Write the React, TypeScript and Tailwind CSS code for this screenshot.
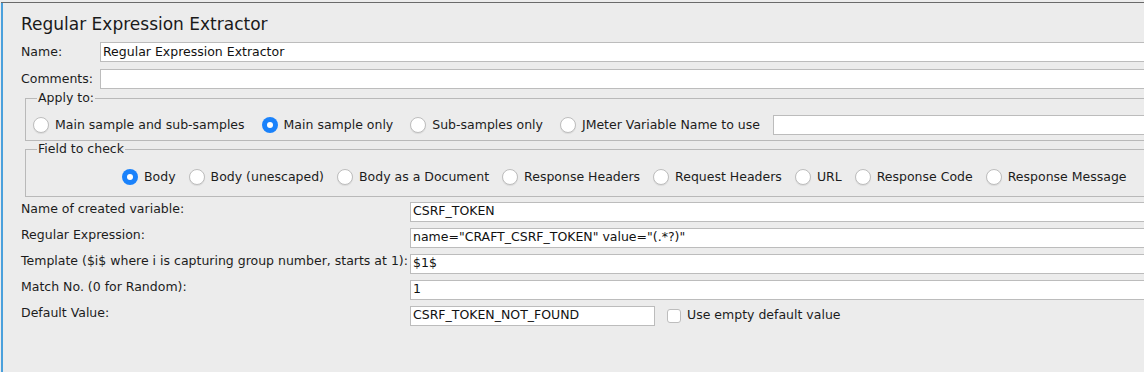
import React from 'react'

const font = { fontFamily: '"DejaVu Sans", "Liberation Sans", sans-serif' }

interface RadioProps {
  label: string
  checked?: boolean
}

const Radio: React.FC<RadioProps> = ({ label, checked }) => (
  <label className="flex items-center gap-[6px] whitespace-nowrap">
    {checked ? (
      <span className="flex h-[16px] w-[16px] items-center justify-center rounded-full bg-[#1a82fb]">
        <span className="h-[6px] w-[6px] rounded-full bg-white" />
      </span>
    ) : (
      <span className="h-[16px] w-[16px] rounded-full border border-[#bdbdbd] bg-white shadow-[0_1px_1px_rgba(0,0,0,0.08)]" />
    )}
    <span>{label}</span>
  </label>
)

const TextBox: React.FC<{ value?: string; className?: string }> = ({ value = '', className = '' }) => (
  <div
    className={`flex h-[20px] items-center border border-[#bcbcbc] bg-white px-[2px] text-[#111] ${className}`}
  >
    {value}
  </div>
)

const rows = [
  { label: 'Name of created variable:', value: 'CSRF_TOKEN' },
  { label: 'Regular Expression:', value: 'name="CRAFT_CSRF_TOKEN" value="(.*?)"' },
  { label: 'Template ($i$ where i is capturing group number, starts at 1):', value: '$1$' },
  { label: 'Match No. (0 for Random):', value: '1' }
]

export default function App() {
  return (
    <div
      className="h-[372px] w-[1144px] overflow-hidden bg-[#ececec] pt-[2px] pl-[1px] text-[12.5px] text-[#1c1c1c]"
      style={font}
    >
      <div className="h-full w-[1260px] border-t-[1px] border-t-[#6a6a6a]">
        <div className="h-full border-l-[2px] border-l-[#4aa0dc] pl-[18px]">
          <div className="pt-[10px] text-[17px] leading-[22px] text-[#1a1a1a]">Regular Expression Extractor</div>

          <div className="mt-[7px] flex items-center">
            <span className="w-[79px]">Name:</span>
            <TextBox value="Regular Expression Extractor" className="flex-1" />
          </div>
          <div className="mt-[7px] flex items-center">
            <span className="w-[79px]">Comments:</span>
            <TextBox className="flex-1" />
          </div>

          <fieldset className="mt-[1px] ml-[4px] border border-[#b9b9b9] pb-[5px] pl-[7px]">
            <legend className="ml-[4px] px-[1px] leading-[16px]">Apply to:</legend>
            <div className="mt-[9px] flex items-center">
              <div className="flex items-center gap-[17px]">
                <Radio label="Main sample and sub-samples" />
                <Radio label="Main sample only" checked />
                <Radio label="Sub-samples only" />
                <Radio label="JMeter Variable Name to use" />
              </div>
              <TextBox className="ml-[13px] flex-1" />
            </div>
          </fieldset>

          <fieldset className="ml-[4px] border border-[#b9b9b9] pb-[9px] pl-[7px]">
            <legend className="ml-[4px] px-[1px] leading-[16px]">Field to check</legend>
            <div className="mt-[11px] ml-[89px] flex items-center gap-[13px]">
              <Radio label="Body" checked />
              <Radio label="Body (unescaped)" />
              <Radio label="Body as a Document" />
              <Radio label="Response Headers" />
              <Radio label="Request Headers" />
              <Radio label="URL" />
              <Radio label="Response Code" />
              <Radio label="Response Message" />
            </div>
          </fieldset>

          <div className="mt-[5px] flex flex-col gap-[6px]">
            {rows.map((r) => (
              <div key={r.label} className="flex items-center">
                <span className="w-[389px] shrink-0 -translate-y-[2px]">{r.label}</span>
                <TextBox value={r.value} className="flex-1" />
              </div>
            ))}
            <div className="flex items-center">
              <span className="w-[389px] shrink-0 -translate-y-[2px]">Default Value:</span>
              <TextBox value="CSRF_TOKEN_NOT_FOUND" className="w-[245px]" />
              <label className="ml-[12px] flex items-center gap-[6px]">
                <span className="h-[14px] w-[14px] rounded-[3px] border border-[#bdbdbd] bg-white" />
                <span>Use empty default value</span>
              </label>
            </div>
          </div>
        </div>
      </div>
    </div>
  )
}
